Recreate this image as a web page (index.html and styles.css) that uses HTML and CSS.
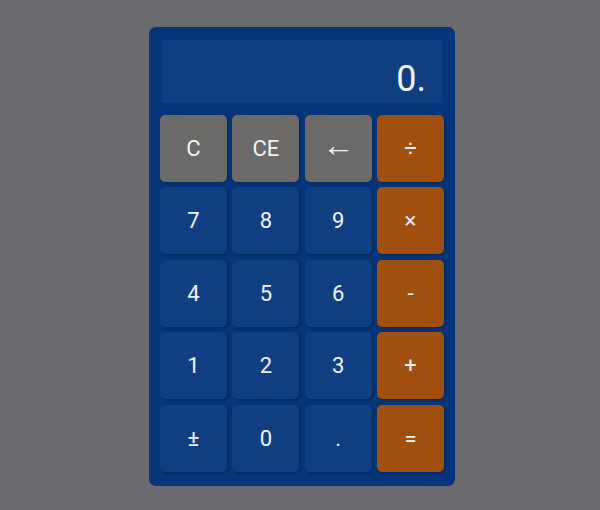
FILE: index.html
```html
<!DOCTYPE html>
<html>
<head>
<meta charset="utf-8">
<link rel="stylesheet" href="styles.css">
</head>
<body>
<div class="calc">
  <div class="display">0.</div>
  <div class="keys">
    <button class="key fn">C</button>
    <button class="key fn">CE</button>
    <button class="key fn arrow">←</button>
    <button class="key op">÷</button>
    <button class="key">7</button>
    <button class="key">8</button>
    <button class="key">9</button>
    <button class="key op">×</button>
    <button class="key">4</button>
    <button class="key">5</button>
    <button class="key">6</button>
    <button class="key op">-</button>
    <button class="key">1</button>
    <button class="key">2</button>
    <button class="key">3</button>
    <button class="key op">+</button>
    <button class="key">±</button>
    <button class="key">0</button>
    <button class="key">.</button>
    <button class="key op">=</button>
  </div>
</div>
</body>
</html>
```
FILE: styles.css
```css
html, body {
  margin: 0;
  padding: 0;
  background: #6a6b6f;
  width: 600px;
  height: 510px;
  overflow: hidden;
}
body {
  font-family: Roboto, "Liberation Sans", sans-serif;
  padding-top: 27px;
  box-sizing: border-box;
}
.calc {
  width: 306px;
  box-sizing: border-box;
  margin-left: 149px;
  background: #06357a;
  border-radius: 7px;
  padding: 13px 11px 14px 11px;
}
.display {
  margin: 0 2px 12px 2px;
  height: 63px;
  background: #0f3f80;
  color: #f2f4f8;
  font-size: 36px;
  text-align: right;
  line-height: 36px;
  padding: 21px 16px 0 0;
  box-sizing: border-box;
}
.keys {
  display: grid;
  grid-template-columns: repeat(4, 67px);
  grid-auto-rows: 67px;
  column-gap: 5.33px;
  row-gap: 5.4px;
}
.key {
  border: none;
  margin: 0;
  padding: 0;
  border-radius: 5px;
  background: #0f3f80;
  color: #f2f4f8;
  font-family: Roboto, "DejaVu Sans", sans-serif;
  font-size: 22px;
  box-shadow: 1px 1px 3px rgba(0, 0, 0, 0.3);
}
.key.fn {
  background: #6b6a68;
}
.key.arrow {
  font-family: "Liberation Sans", sans-serif;
  font-size: 32px;
  padding-bottom: 7px;
}
.key.op {
  background: #a14f0e;
}
```
